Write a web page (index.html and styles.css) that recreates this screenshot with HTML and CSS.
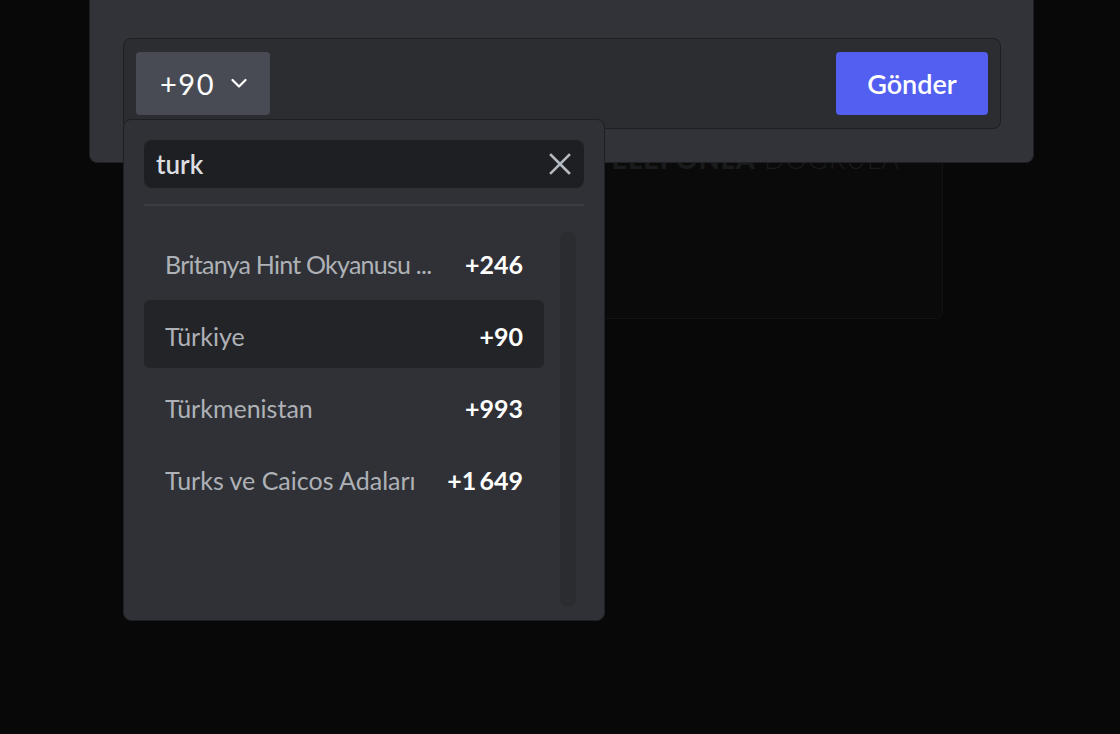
FILE: index.html
```html
<!DOCTYPE html>
<html lang="tr">
<head>
<meta charset="utf-8">
<title>Telefon doğrulama</title>
<link rel="stylesheet" href="styles.css">
</head>
<body>
  <div class="backdrop-card">
    <div class="backdrop-title"><b>TELEFONLA</b> DOĞRULA</div>
  </div>

  <div class="modal">
    <div class="phone-field">
      <button class="country-btn" type="button">
        <span class="country-code">+90</span>
        <svg class="chevron" width="16" height="11" viewBox="0 0 16 11"><path d="M1.5 2 L8 8.5 L14.5 2" fill="none" stroke="#ffffff" stroke-width="2.2" stroke-linecap="round" stroke-linejoin="round"/></svg>
      </button>
      <button class="send-btn" type="button">Gönder</button>

      <div class="dropdown">
        <div class="search">
          <span class="search-text">turk</span>
          <svg class="clear" width="22" height="22" viewBox="0 0 22 22"><path d="M2 2 L20 20 M20 2 L2 20" stroke="#b5bac1" stroke-width="2.6" stroke-linecap="square"/></svg>
        </div>
        <div class="divider"></div>
        <div class="list-area">
          <div class="rows">
            <div class="row"><span class="name tight">Britanya Hint Okyanusu ...</span><span class="code">+246</span></div>
            <div class="row selected"><span class="name">Türkiye</span><span class="code">+90</span></div>
            <div class="row"><span class="name">Türkmenistan</span><span class="code">+993</span></div>
            <div class="row"><span class="name">Turks ve Caicos Adaları</span><span class="code">+1&#8201;649</span></div>
          </div>
          <div class="scroll-track"></div>
        </div>
      </div>
    </div>
  </div>
</body>
</html>
```

FILE: styles.css
```css
* { box-sizing: border-box; }

html, body {
  margin: 0;
  padding: 0;
}

body {
  width: 1120px;
  height: 734px;
  overflow: hidden;
  background: #080808;
  font-family: Lato, "Noto Sans", "Liberation Sans", sans-serif;
  position: relative;
}

.backdrop-card {
  position: absolute;
  left: 178px;
  top: 40px;
  width: 765px;
  height: 279px;
  background: #0a0a0a;
  border: 1px solid #131313;
  border-radius: 8px;
  padding: 103px 42px 0 0;
  text-align: right;
}

.backdrop-title {
  font-size: 27px;
  line-height: 30px;
  color: #1a1b1c;
  letter-spacing: 1px;
  font-weight: 300;
}

.backdrop-title b {
  font-weight: 900;
}

.modal {
  position: relative;
  margin: -30px 0 0 89px;
  width: 945px;
  background: #313338;
  border: 1px solid #1f2023;
  border-radius: 8px;
  padding: 67px 32px 33px 33px;
}

.phone-field {
  position: relative;
  display: flex;
  align-items: center;
  justify-content: space-between;
  height: 91px;
  padding: 0 12px;
  background: #2b2d31;
  border: 1px solid #1e1f22;
  border-radius: 8px;
}

.country-btn {
  display: flex;
  align-items: center;
  gap: 16px;
  width: 134px;
  height: 63px;
  padding: 0 0 0 24px;
  border: none;
  border-radius: 4px;
  background: #484b53;
  color: #ffffff;
  font-family: inherit;
}

.country-code {
  font-size: 29px;
  letter-spacing: 1.5px;
  line-height: 1;
}

.chevron { display: block; }

.send-btn {
  width: 152px;
  height: 63px;
  border: none;
  border-radius: 4px;
  background: #525ff0;
  color: #ffffff;
  font-family: inherit;
  font-size: 27px;
  font-weight: 600;
}

.dropdown {
  position: absolute;
  left: -1px;
  top: 80px;
  width: 482px;
  height: 502px;
  background: #2f3136;
  border: 1px solid #1e1f22;
  border-radius: 8px;
  padding: 20px 20px 0 20px;
  display: flex;
  flex-direction: column;
  z-index: 2;
}

.search {
  display: flex;
  align-items: center;
  justify-content: space-between;
  height: 48px;
  padding: 0 13px 0 12px;
  background: #1e1f22;
  border-radius: 8px;
}

.search-text {
  font-size: 26px;
  font-weight: 600;
  color: #dbdee1;
}

.clear { display: block; }

.divider {
  height: 2px;
  margin-top: 16px;
  background: #3b3d43;
}

.list-area {
  display: flex;
  gap: 16px;
  margin-top: 22px;
}

.rows {
  width: 400px;
  display: flex;
  flex-direction: column;
  gap: 4px;
}

.row {
  display: flex;
  align-items: center;
  height: 68px;
  padding: 3px 21px 0 21px;
  border-radius: 6px;
}

.row.selected {
  background: #232428;
}

.name {
  flex: 1;
  min-width: 0;
  white-space: nowrap;
  overflow: hidden;
  text-overflow: ellipsis;
  font-size: 25px;
  color: #aeb1b6;
}

.name.tight {
  letter-spacing: -0.75px;
}

.code {
  margin-left: 20px;
  font-size: 25px;
  font-weight: 700;
  color: #ffffff;
  white-space: nowrap;
}

.scroll-track {
  width: 16px;
  height: 375px;
  margin-top: 4px;
  border-radius: 8px;
  background: #2a2c30;
}
```
